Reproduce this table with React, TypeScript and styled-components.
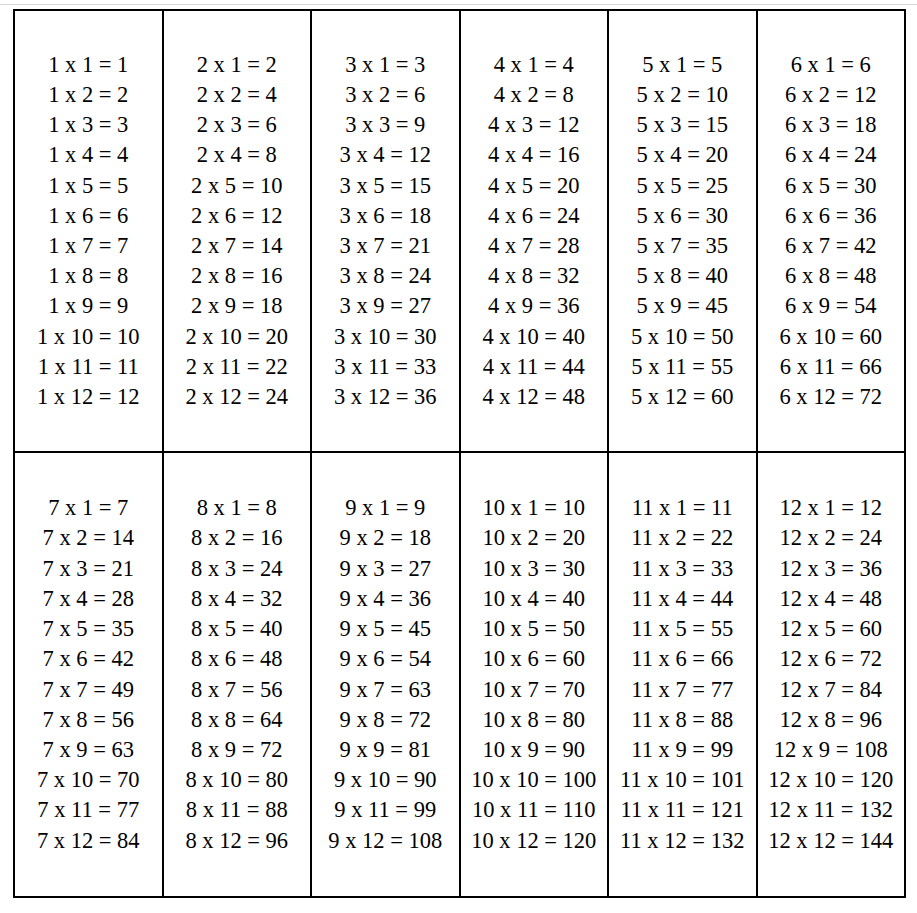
import React from "react";
import styled, { createGlobalStyle } from "styled-components";

const GlobalStyle = createGlobalStyle`
  html, body {
    margin: 0;
    padding: 0;
    background: #fff;
  }
  body {
    font-family: "Liberation Serif", "Times New Roman", "DejaVu Serif", serif;
    color: #000;
  }
`;

const Page = styled.div`
  width: 917px;
  padding-top: 4px;
`;

const Rule = styled.div`
  height: 1px;
  background: #d9d9d9;
  margin-bottom: 4px;
`;

const Table = styled.div`
  margin-left: 13px;
  width: 893px;
  box-sizing: border-box;
  display: grid;
  grid-template-columns: repeat(6, 146.5px);
  grid-template-rows: 440px 443px;
  gap: 2px;
  border: 2px solid #000;
  background: #000;
`;

const Cell = styled.div`
  background: #fff;
  display: flex;
  flex-direction: column;
  align-items: center;
  justify-content: center;
  font-family: "Liberation Serif", "Times New Roman", serif;
  font-size: 22.5px;
  line-height: 30.2px;
  white-space: nowrap;
`;

const Line = styled.div``;

// kept as printed in the source sheet
const overrides: Record<string, string> = {
  "11x10": "101",
  "11x11": "121",
  "11x12": "132",
};

const result = (a: number, b: number) =>
  overrides[`${a}x${b}`] ?? String(a * b);

export default function App() {
  const tables = Array.from({ length: 12 }, (_, i) => i + 1);
  const factors = Array.from({ length: 12 }, (_, i) => i + 1);
  return (
    <Page>
      <GlobalStyle />
      <Rule />
      <Table>
        {tables.map((a) => (
          <Cell key={a}>
            {factors.map((b) => (
              <Line key={b}>
                {a} x {b} = {result(a, b)}
              </Line>
            ))}
          </Cell>
        ))}
      </Table>
    </Page>
  );
}
